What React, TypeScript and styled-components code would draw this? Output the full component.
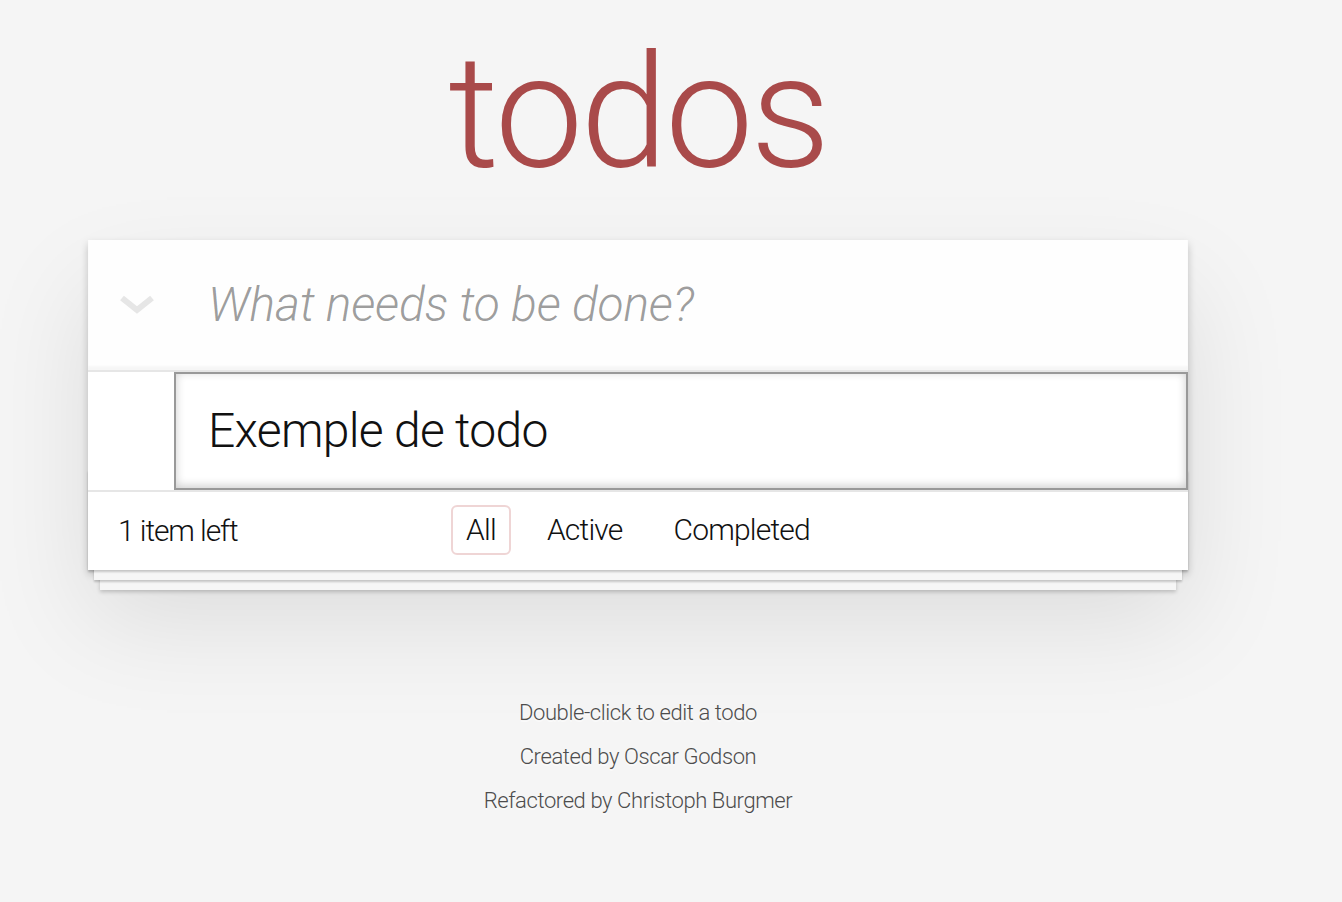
import React from 'react';
import styled, { createGlobalStyle } from 'styled-components';

const GlobalStyle = createGlobalStyle`
  html, body {
    margin: 0;
    padding: 0;
  }

  body {
    background: #f5f5f5;
    color: #111111;
    font-family: Roboto, "Helvetica Neue", Helvetica, Arial, sans-serif;
    font-weight: 300;
    font-size: 28px;
    line-height: 39px;
    -webkit-font-smoothing: antialiased;
  }
`;

const Page = styled.div`
  width: 1276px;
  min-height: 902px;
`;

const Column = styled.section`
  width: 1100px;
  margin: 0 auto;
`;

const Title = styled.h1`
  margin: 32px 0 48px;
  font-size: 158px;
  line-height: 160px;
  font-weight: 300;
  text-align: center;
  color: #a94a4a;
  letter-spacing: -3px;
`;

const TodoApp = styled.div`
  position: relative;
  background: #fff;
  box-shadow: 0 4px 8px 0 rgba(0, 0, 0, 0.2), 0 50px 100px 0 rgba(0, 0, 0, 0.1);
`;

const Header = styled.header`
  display: flex;
  align-items: stretch;
  height: 130px;
  background: rgba(0, 0, 0, 0.003);
  box-shadow: inset 0 -4px 2px rgba(0, 0, 0, 0.03);
`;

const ToggleAll = styled.label`
  flex: 0 0 90px;
  display: flex;
  align-items: center;
  justify-content: center;
  padding-left: 8px;
  box-sizing: border-box;
  color: #e6e6e6;
`;

const TextInput = styled.input`
  flex: 1;
  min-width: 0;
  margin: 0;
  font-family: inherit;
  font-weight: 300;
  font-size: 48px;
  line-height: 66px;
  letter-spacing: -0.7px;
  color: #111;
  outline: none;
  box-sizing: border-box;
  background: transparent;
`;

const NewTodo = styled(TextInput)`
  border: none;
  padding: 32px 32px 32px 30px;
  letter-spacing: -0.2px;

  &::placeholder {
    font-style: italic;
    font-weight: 300;
    color: rgba(0, 0, 0, 0.4);
  }
`;

const Main = styled.section`
  position: relative;
  z-index: 2;
  border-top: 2px solid #e6e6e6;
`;

const TodoList = styled.ul`
  margin: 0;
  padding: 0;
  list-style: none;
`;

const TodoItem = styled.li<{ $editing?: boolean }>`
  display: flex;
  padding: 0 0 0 86px;
  border-bottom: ${p => (p.$editing ? 'none' : '2px solid #ededed')};
`;

const EditInput = styled(TextInput)`
  display: block;
  width: 100%;
  padding: 24px 32px;
  border: 2px solid #999;
  background: #fff;
  box-shadow: inset 0 -2px 10px 0 rgba(0, 0, 0, 0.2);
`;

const Footer = styled.footer`
  position: relative;
  display: grid;
  grid-template-columns: 1fr auto 1fr;
  grid-template-rows: 40px;
  align-items: center;
  padding: 18px 30px 20px;
  border-top: 2px solid #e6e6e6;
  font-size: 30px;
  letter-spacing: -0.8px;
  color: #111;

  &::before {
    content: '';
    position: absolute;
    right: 0;
    bottom: 0;
    left: 0;
    height: 100px;
    overflow: hidden;
    pointer-events: none;
    box-shadow: 0 2px 2px rgba(0, 0, 0, 0.2),
      0 16px 0 -6px #f6f6f6,
      0 18px 2px -6px rgba(0, 0, 0, 0.2),
      0 32px 0 -12px #f6f6f6,
      0 34px 4px -12px rgba(0, 0, 0, 0.2);
  }
`;

const Count = styled.span`
  position: relative;
  justify-self: start;
  letter-spacing: -1.1px;
`;

const Filters = styled.ul`
  position: relative;
  display: flex;
  gap: 9px;
  margin: 0;
  padding: 0;
  list-style: none;
`;

const FilterLink = styled.a<{ $selected?: boolean }>`
  display: inline-block;
  margin: 6px;
  padding: 6px 13px;
  line-height: 34px;
  color: inherit;
  text-decoration: none;
  border: 2px solid ${p => (p.$selected ? 'rgba(175, 47, 47, 0.2)' : 'transparent')};
  border-radius: 6px;
  cursor: pointer;
`;

const Info = styled.footer`
  margin: 132px auto 0;
  color: #4d4d4d;
  font-size: 22px;
  letter-spacing: -0.4px;
  text-align: center;
  text-shadow: 0 2px 0 rgba(255, 255, 255, 0.5);

  p {
    margin: 22px 0;
    line-height: 1;
  }
`;

const Chevron = () => (
  <svg width="36" height="20" viewBox="0 0 36 20" aria-hidden="true">
    <path d="M3 3 L18 15 L33 3" fill="none" stroke="currentColor" strokeWidth="6" strokeLinejoin="miter" />
  </svg>
);

const filters = ['All', 'Active', 'Completed'];

export default function App() {
  return (
    <Page>
      <GlobalStyle />
      <Column>
        <Title>todos</Title>
        <TodoApp>
          <Header>
            <ToggleAll>
              <Chevron />
            </ToggleAll>
            <NewTodo placeholder="What needs to be done?" />
          </Header>
          <Main>
            <TodoList>
              <TodoItem $editing>
                <EditInput defaultValue="Exemple de todo" />
              </TodoItem>
            </TodoList>
          </Main>
          <Footer>
            <Count>1 item left</Count>
            <Filters>
              {filters.map(f => (
                <li key={f}>
                  <FilterLink $selected={f === 'All'}>{f}</FilterLink>
                </li>
              ))}
            </Filters>
          </Footer>
        </TodoApp>
        <Info>
          <p>Double-click to edit a todo</p>
          <p>Created by Oscar Godson</p>
          <p>Refactored by Christoph Burgmer</p>
        </Info>
      </Column>
    </Page>
  );
}
